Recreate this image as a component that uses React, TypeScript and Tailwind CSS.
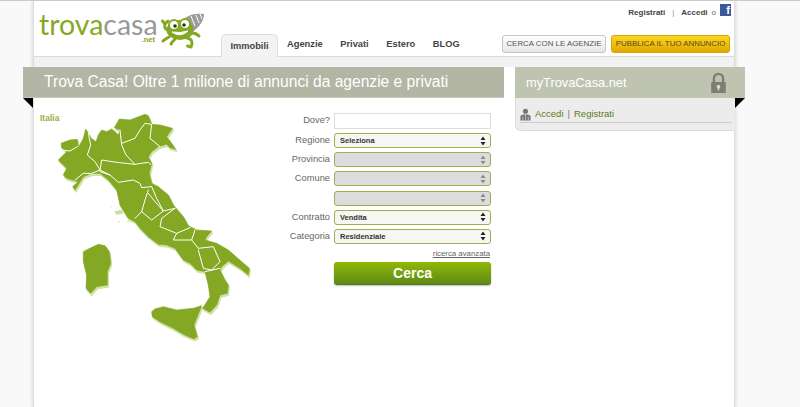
import React from "react";

const font = "[font-family:'Liberation_Sans',Arial,sans-serif]";

function Crab() {
  return (
    <svg width="60" height="42" viewBox="0 0 60 42" className="block">
      <path d="M30 10 C35 6 42 5 49 6 C49 11 46 17 41 21 C39 23 37 24 35 24 C36 18 34 13 30 10Z" fill="#9c9c9c" />
      <path d="M36 8 L40 18 M41 7 L44 15 M45 6 L47 11" stroke="#fff" strokeWidth="1" fill="none" />
      <ellipse cx="25" cy="22" rx="13.5" ry="10" fill="#84a824" />
      <circle cx="19" cy="17" r="5" fill="#fff" stroke="#84a824" strokeWidth="2" />
      <circle cx="30" cy="16" r="5" fill="#fff" stroke="#84a824" strokeWidth="2" />
      <circle cx="20" cy="18" r="1.8" fill="#2c3a10" />
      <circle cx="29" cy="17" r="1.8" fill="#2c3a10" />
      <path d="M17 24 Q25 30 33 23 Q25 25.5 17 24Z" fill="#fff" stroke="#fff" strokeWidth="1" />
      <path d="M13 22 C10 21 9 19 10 16 M10 16 L7.5 13 M10 16 L13 13 M14 29 C12 30 10 31 8 33 M20 31 C18 33 17 34 16 36 M32 30 C37 31 38 34 36 39 L32.5 38 M37 25 C40 25 42 26 44 28" stroke="#84a824" strokeWidth="3" fill="none" strokeLinecap="round" strokeLinejoin="round" />
    </svg>
  );
}

function ItalyMap() {
  const main =
    "M123 115 L150 105 L172 103 L175 128 L190 100 L197 72 L205 85 L213 100 L228 110 L235 90 L245 75 L260 80 L275 72 L283 78 L295 90 L300 75 L283 68 L298 42 L330 45 L375 28 L385 32 L395 58 L420 60 L458 70 L447 85 L440 95 L455 115 L467 133 L450 128 L440 118 L415 125 L395 140 L385 155 L395 175 L388 205 L395 235 L415 245 L445 270 L460 300 L490 335 L505 362 L530 375 L575 378 L560 395 L555 405 L590 415 L625 435 L665 470 L688 490 L685 510 L660 490 L625 468 L605 485 L600 495 L615 525 L625 540 L622 565 L600 570 L590 600 L570 622 L548 610 L570 575 L565 540 L555 500 L530 495 L510 475 L490 465 L465 430 L440 420 L415 418 L385 395 L360 370 L345 350 L325 340 L300 300 L290 255 L265 225 L240 205 L215 205 L190 215 L165 255 L158 245 L175 230 L140 220 L130 210 L140 190 L115 165 L140 140 L125 128 Z";
  const sard =
    "M190 440 L205 432 L235 418 L255 422 L268 440 L272 475 L262 500 L262 540 L230 545 L212 565 L198 550 L200 510 L190 470 Z";
  const sic =
    "M395 620 L405 612 L430 605 L470 615 L520 610 L545 602 L530 640 L522 660 L532 695 L522 702 L490 688 L460 670 L420 650 L397 635 Z";
  const lines =
    "M123 135 L150 138 L172 125 M205 85 L212 120 L202 150 L225 170 L240 195 M240 195 L245 165 L290 172 L345 178 L385 172 L392 178 M300 75 L305 120 L318 150 L345 178 M305 115 L345 100 L360 75 L375 55 L395 58 M395 58 L390 100 L420 125 M165 225 L190 205 L215 205 L240 195 L270 210 M240 200 L270 210 L295 232 L340 225 L360 235 L365 248 L395 245 M385 255 L375 285 L365 320 M345 340 L365 320 L395 345 L430 318 L405 290 L385 265 M395 245 L410 280 L430 318 L465 310 M465 310 L425 340 L420 365 L470 385 L510 368 M470 385 L460 405 L515 405 L525 375 M515 405 L535 430 L580 425 L600 470 L575 495 L550 490 L535 435 M555 500 L600 490";
  const isles = "M270 305 L274 305 M285 320 L305 316 L308 325 L290 328 Z M295 350 L300 350 M322 350 L328 350";
  return (
    <svg width="240" height="240" viewBox="0 0 720 720" className="block">
      <g transform="translate(3 6)" fill="#d3e2a8" stroke="#d3e2a8" strokeWidth="4" strokeLinejoin="round">
        <path d={main} />
        <path d={sard} />
        <path d={sic} />
      </g>
      <g fill="#84a824" stroke="#84a824" strokeWidth="2" strokeLinejoin="round">
        <path d={main} />
        <path d={sard} />
        <path d={sic} />
      </g>
      <path d={isles} fill="#cfdca8" stroke="#cfdca8" strokeWidth="3" />
      <path d={lines} fill="none" stroke="#fff" strokeWidth="3" strokeLinejoin="round" strokeLinecap="round" />
    </svg>
  );
}

function Arrows({ dim }: { dim?: boolean }) {
  return (
    <svg width="6" height="10" viewBox="0 0 6 10" className="block">
      <path d="M3 0.5 L5.5 4 H0.5Z M3 9.5 L5.5 6 H0.5Z" fill={dim ? "#8a8a8a" : "#222"} />
    </svg>
  );
}

function Sel({ label, value, off }: { label: string; value?: string; off?: boolean }) {
  return (
    <div className="flex items-center gap-[4px] h-[15px]">
      <span className="w-[60px] text-right text-[9.3px] text-[#666] leading-none">{label}</span>
      <div
        className={`w-[157px] h-[15px] rounded-[3px] border border-[#9bb04e] flex items-center justify-between pl-[5px] pr-[4px] text-[7.5px] font-bold text-[#333] ${off ? "bg-[#dcdcdc]" : "bg-[#f6f6f2]"}`}
      >
        <span>{value}</span>
        <Arrows dim={off} />
      </div>
    </div>
  );
}

export default function App() {
  return (
    <div className={`${font} w-[800px] h-[407px] overflow-hidden bg-[#f9f9f9] border-t border-[#c9c9c9]`}>
      <div className="ml-[33px] w-[702px] h-[406px] bg-white border-l border-r border-[#dedede] shadow-[0_0_4px_rgba(0,0,0,0.18)]">
        {/* header */}
        <header className="h-[56px] border-b border-[#dcdcdc] flex">
          <div className="w-[187px] shrink-0 pl-[5px] pt-[9px] flex items-start">
            <div className="w-[117px] shrink-0">
              <div className="text-[28.5px] leading-[28px] whitespace-nowrap [font-family:Lato,sans-serif]">
                <span className="text-[#84a824]">trova</span>
                <span className="text-[#999]">casa</span>
              </div>
              <div className="text-[7.5px] leading-[8px] mt-[-2px] font-bold text-[#84a824] text-right pr-[1px]">.net</div>
            </div>
            <div className="ml-[-1px] mt-[-2px] shrink-0">
              <Crab />
            </div>
          </div>
          <div className="flex-1 flex flex-col">
            <div className="h-[33px] flex justify-end items-start pr-[3px] pt-[3px] text-[8px] font-bold text-[#444]">
              <span className="mt-[3px]">Registrati</span>
              <span className="mt-[3px] mx-[7px] font-normal text-[#7a93b8]">|</span>
              <span className="mt-[3px]">Accedi</span>
              <span className="mt-[3px] mx-[4px] font-normal text-[#666]">o</span>
              <span className="w-[11px] h-[12px] bg-[#3b5998] text-white text-[11px] leading-[13px] text-right pr-[1px]">f</span>
            </div>
            <div className="flex items-end h-[23px]">
              <div className="w-[57px] h-[23px] mb-[-1px] rounded-t-[5px] bg-[#f3f3f3] border border-b-0 border-[#dedede] text-[9.3px] font-bold text-[#444] text-center leading-[22px]">
                Immobili
              </div>
              <nav className="flex gap-[17.6px] ml-[9px] text-[9.3px] font-bold text-[#444] h-[23px] leading-[22px]">
                <span>Agenzie</span>
                <span>Privati</span>
                <span>Estero</span>
                <span>BLOG</span>
              </nav>
              <div className="ml-auto flex gap-[5px] pr-[4px] mb-[3px]">
                <div className="w-[104px] h-[18px] rounded-[3px] border border-[#c4c4c4] bg-gradient-to-b from-white to-[#e6e6e6] text-[7.9px] whitespace-nowrap text-[#555] text-center leading-[16px]">
                  CERCA CON LE AGENZIE
                </div>
                <div className="w-[119px] h-[18px] rounded-[3px] border border-[#d6a500] bg-gradient-to-b from-[#fbd520] to-[#e0a800] text-[7.9px] whitespace-nowrap text-[#5a4a10] text-center leading-[16px]">
                  PUBBLICA IL TUO ANNUNCIO
                </div>
              </div>
            </div>
          </div>
        </header>
        <div className="h-[10px] bg-[#f2f2f2]" />

        {/* content */}
        <div className="flex">
          <div className="w-[471px] shrink-0">
            <div className="relative ml-[-11px] w-[481px] h-[31px] bg-[#b3b5a5] border-b border-[#c8c9bd] pl-[21px] text-[15.6px] leading-[29px] whitespace-nowrap text-white">
              Trova Casa! Oltre 1 milione di annunci da agenzie e privati
              <div className="absolute left-0 top-[31px] w-0 h-0 border-t-[10px] border-l-[10px] border-t-black border-l-transparent" />
            </div>
            <div className="flex">
              <div className="w-[236px] shrink-0 h-[240px]">
                <div className="pl-[6px] pt-[15px] text-[8.5px] leading-[10px] font-bold text-[#9ab03e]">Italia</div>
                <div className="ml-[-14px] mt-[-18px]">
                  <ItalyMap />
                </div>
              </div>
              <div className="pt-[15px] w-[221px] flex flex-col">
                <div className="flex items-center gap-[4px] h-[15px]">
                  <span className="w-[60px] text-right text-[9.3px] text-[#666] leading-none">Dove?</span>
                  <div className="w-[157px] h-[16px] border border-[#dddddd] bg-white" />
                </div>
                <div className="flex flex-col gap-[4.2px] mt-[5px]">
                  <Sel label="Regione" value="Seleziona" />
                  <Sel label="Provincia" off />
                  <Sel label="Comune" off />
                  <Sel label="" off />
                  <Sel label="Contratto" value="Vendita" />
                  <Sel label="Categoria" value="Residenziale" />
                </div>
                <div className="w-[221px] text-right pr-[1px] text-[7.8px] leading-[10px] mt-[5px] text-[#666] underline">
                  ricerca avanzata
                </div>
                <div className="ml-[64px] mt-[3px] w-[157px] h-[23px] rounded-[3px] bg-gradient-to-b from-[#8fb800] to-[#5f8a14] border-b border-[#55751a] text-white font-bold text-[14px] leading-[22px] text-center shadow-[0_1px_2px_rgba(0,0,0,0.25)]">
                  Cerca
                </div>
              </div>
            </div>
          </div>

          {/* right */}
          <aside className="ml-[10px] w-[220px] shrink-0">
            <div className="relative w-[230px] h-[31px] bg-[#bfc4b0] pl-[11px] pr-[18px] flex items-center justify-between text-white text-[12.8px]">
              <span>myTrovaCasa.net</span>
              <svg width="17" height="22" viewBox="0 0 18 24">
                <path d="M4 12 V7 a5 5 0 0 1 10 0 V12" fill="none" stroke="#7c7f72" strokeWidth="2.6" />
                <rect x="1" y="11" width="16" height="12" rx="1" fill="#7c7f72" />
                <circle cx="9" cy="16" r="2" fill="#d8dbcc" />
                <rect x="8.2" y="16" width="1.6" height="4" fill="#d8dbcc" />
              </svg>
              <div className="absolute right-0 top-[31px] w-0 h-0 border-t-[10px] border-r-[10px] border-t-black border-r-transparent" />
            </div>
            <div className="h-[33px] bg-[#ececec] border-b border-l border-[#dcdcdc] rounded-bl-[6px] px-[4px]">
              <div className="h-[25px] pt-[9px] border-b border-[#cccccc] flex items-center text-[9.5px] text-[#5d7a22]">
                <svg width="11" height="13" viewBox="0 0 12 14">
                  <circle cx="6" cy="3.5" r="2.8" fill="#777" />
                  <path d="M0.5 13.5 V9 Q1 7 4 7 H8 Q11 7 11.5 9 V13.5Z" fill="#777" />
                  <path d="M6 7 V13.5 M3 9.5 V13.5 M9 9.5 V13.5" stroke="#ddd" strokeWidth="0.7" />
                </svg>
                <span className="ml-[4px]">Accedi</span>
                <span className="text-[#777] mx-[4px]">|</span>
                <span>Registrati</span>
              </div>
            </div>
          </aside>
        </div>
      </div>
    </div>
  );
}
